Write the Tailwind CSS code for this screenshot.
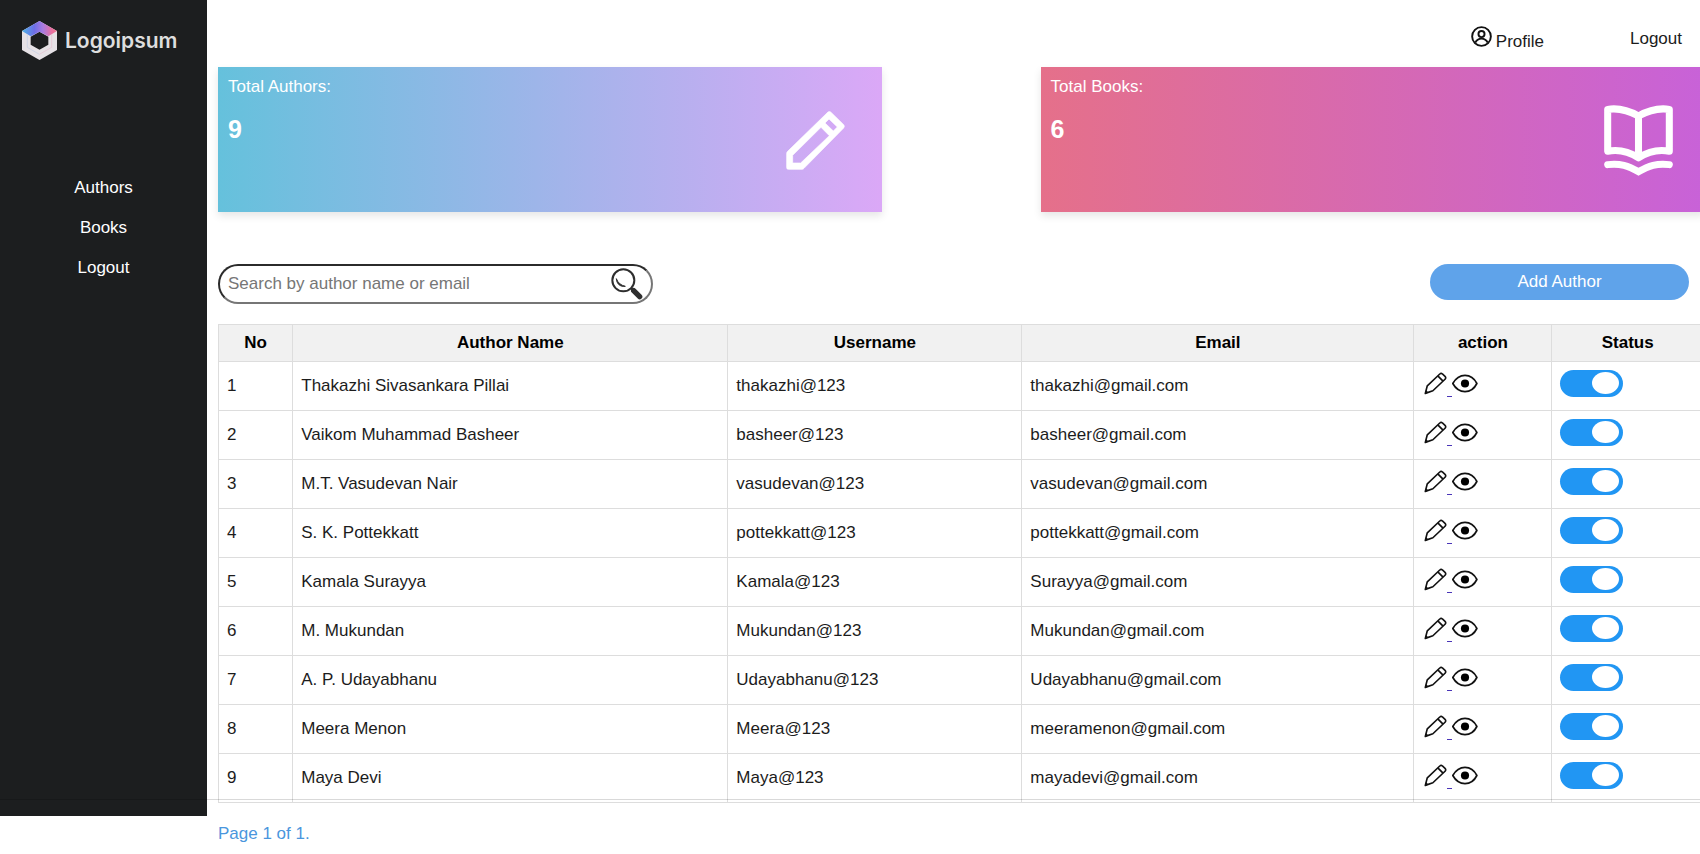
<!DOCTYPE html>
<html lang="en">
<head>
<meta charset="utf-8">
<meta name="viewport" content="width=device-width, initial-scale=1">
<title>Authors</title>
<script src="https://cdn.jsdelivr.net/npm/@tailwindcss/browser@4"></script>
</head>
<body class="bg-white font-['Liberation_Sans',Arial,sans-serif] text-[17px] leading-5 text-[#1c1c1c] overflow-x-hidden">

<svg class="hidden" aria-hidden="true">
  <symbol id="pencil" viewBox="104 367 70 70">
    <g fill="none" stroke="#111" stroke-width="5" stroke-linejoin="round">
      <path d="M108 432 L114 409 L152 373 Q156 369 160 373 L168 380 Q172 384 168 389 L131 424 Z"/>
      <path d="M146 379 L162 395"/>
    </g>
    <path d="M107 433 L110 422 L118 430 Z" fill="#111"/>
  </symbol>
  <symbol id="eye" viewBox="192 374 76 56">
    <path d="M194 402 C203 386 215 378 230 378 C245 378 257 386 265 402 C257 418 245 426 230 426 C215 426 203 418 194 402 Z" fill="none" stroke="#111" stroke-width="5" stroke-linejoin="round"/>
    <circle cx="230" cy="402" r="12" fill="#000"/>
  </symbol>
</svg>

<div class="relative flex">
  <aside class="w-[207px] shrink-0 bg-[#1c1e1f] text-white">
    <a href="#" class="flex items-center gap-2 pl-[22px] pt-[21px] text-[#dedede]">
      <svg class="w-[35px] h-[39px]" viewBox="66 63 105 117" aria-hidden="true">
        <defs>
          <linearGradient id="lg" x1="0" x2="1" y1="0" y2="0">
            <stop offset="0" stop-color="#4fb4e6"/><stop offset=".35" stop-color="#6c6ee6"/>
            <stop offset=".6" stop-color="#a97be0"/><stop offset=".85" stop-color="#e8709f"/><stop offset="1" stop-color="#ee7a92"/>
          </linearGradient>
        </defs>
        <path fill="#e6e2e6" fill-rule="evenodd" d="M118.500 63 L171 93 V150 L118.500 180 L66 150 V93 Z M118.500 95 L92 110 V134 L118.500 149 L145 134 V110 Z"/>
        <path fill="url(#lg)" d="M118.500 63 L171 93 L145 109 L118.500 95 L92 109 L66 93 Z"/>
        <path fill="none" stroke="#c3cfe6" stroke-width="2" d="M82 103 V142 L118 163"/>
        <path fill="none" stroke="#e6bfd0" stroke-width="2" d="M155 103 V142 L118 163"/>
      </svg>
      <span class="font-['Inter',sans-serif] font-semibold text-[21px] leading-7">Logoipsum</span>
    </a>
    <nav class="mt-[118px] flex flex-col items-center gap-5">
      <a href="#">Authors</a>
      <a href="#">Books</a>
      <a href="#">Logout</a>
    </nav>
  </aside>

  <main class="min-w-0 flex-1 pl-[11px] pb-[13px]">
    <header class="flex h-[67px] items-start justify-end gap-[86px] pr-[18px] pt-[26px]">
      <a href="#" class="flex items-start gap-1">
        <svg class="w-[21px] h-[21px]" viewBox="0 0 22 22" fill="none" stroke="#111" stroke-width="2" aria-hidden="true">
          <circle cx="11" cy="11" r="9.800"/>
          <circle cx="11" cy="8.500" r="3.200"/>
          <path d="M4.500 17.500 C6 14.200 8 13.200 11 13.200 C14 13.200 16 14.200 17.500 17.500"/>
        </svg>
        <span class="pt-1.5">Profile</span>
      </a>
      <a href="#" class="pt-[3px]">Logout</a>
    </header>

    <section class="-mr-1 grid grid-cols-2 gap-x-[159px] text-white">
      <article class="flex h-[145px] items-start justify-between bg-[linear-gradient(to_right,#65c1dc,#dba8f7)] pl-2.5 pr-[37px] pt-2.5 shadow-[0_4px_8px_rgba(0,0,0,0.1)]">
        <div>
          <h2>Total Authors:</h2>
          <p class="mt-4 text-[25px] font-bold leading-8">9</p>
        </div>
        <svg class="mt-[34px] w-[59px] h-[59px]" viewBox="257 182 177 177" aria-hidden="true">
          <path fill="#fff" stroke="#fff" stroke-width="2" stroke-linejoin="round" fill-rule="evenodd" d="M259 309 Q259 306 262 303 L383 185 Q387 182 391 185 L430 223 Q434 228 430 233 L311 354 Q309 357 305 357 H264 Q259 357 259 352 Z M277 315 V338 H301 L387 256 L362 231 Z M374 218 L399 242 L411 230 L386 206 Z"/>
        </svg>
      </article>
      <article class="flex h-[145px] items-start justify-between bg-[linear-gradient(to_right,#e5708a,#c862d8)] pl-2.5 pr-[31px] pt-2.5 shadow-[0_4px_8px_rgba(0,0,0,0.1)]">
        <div>
          <h2>Total Books:</h2>
          <p class="mt-4 text-[25px] font-bold leading-8">6</p>
        </div>
        <svg class="mt-7 w-[69px] h-[71px]" viewBox="492 314 206 212" fill="none" stroke="#fff" stroke-width="21" aria-hidden="true">
          <path stroke-linejoin="round" d="M503 327 C535 322 565 330 595 347 C625 330 655 322 687 327 V452 C655 446 625 452 595 472 C565 452 535 446 503 452 Z M595 347 V472"/>
          <path stroke-linecap="round" d="M503 492 C540 487 565 496 595 513 C625 496 650 487 687 492"/>
        </svg>
      </article>
    </section>

    <div class="mt-[52px] flex items-start justify-between pr-[11px]">
      <form class="flex h-10 w-[435px] items-center rounded-full border-2 border-t-[#2b2b2b] border-l-[#2b2b2b] border-r-[#767676] border-b-[#767676] pl-2 pr-2">
        <label for="search" class="sr-only">Search by author name or email</label>
        <input id="search" type="text" placeholder="Search by author name or email" class="h-full min-w-0 flex-1 outline-none placeholder:text-[#767676]">
        <button type="submit" aria-label="Search">
          <svg class="w-8 h-8" viewBox="1232 54 96 96" fill="none" stroke="#2e2e2e" aria-hidden="true">
            <circle cx="1269" cy="91" r="33" stroke-width="6"/>
            <path d="M1248 86 C1249 102 1260 111 1275 109 C1262 106 1253 99 1248 86 Z" stroke-width="3" fill="#2e2e2e"/>
            <path d="M1292 114 L1300 122" stroke-width="7"/>
            <path d="M1300 122 L1318 140" stroke-width="16" stroke-linecap="round"/>
          </svg>
        </button>
      </form>
      <button type="button" class="h-9 w-[259px] rounded-full bg-[#5fa3ea] text-white">Add Author</button>
    </div>

    <div class="-mr-1 mt-5">
      <table class="w-full table-fixed border-collapse [&_th]:border [&_th]:border-[#ddd] [&_td]:border [&_td]:border-[#ddd]">
        <colgroup>
          <col class="w-[5%]"><col class="w-[29.3%]"><col class="w-[19.8%]"><col class="w-[26.4%]"><col class="w-[9.3%]"><col>
        </colgroup>
        <thead>
          <tr class="h-[37px] bg-[#f1f1f1] font-bold text-black">
            <th scope="col">No</th><th scope="col">Author Name</th><th scope="col">Username</th><th scope="col">Email</th><th scope="col">action</th><th scope="col">Status</th>
          </tr>
        </thead>
        <tbody id="rows"></tbody>
      </table>
    </div>
  </main>
  <div class="pointer-events-none absolute inset-x-0 bottom-4 h-px bg-black/15"></div>
</div>
<footer class="pl-[218px] pt-2 text-[#4a96dd]">Page 1 of 1.</footer>

<script>
const authors = [
  ["Thakazhi Sivasankara Pillai", "thakazhi@123", "thakazhi@gmail.com"],
  ["Vaikom Muhammad Basheer", "basheer@123", "basheer@gmail.com"],
  ["M.T. Vasudevan Nair", "vasudevan@123", "vasudevan@gmail.com"],
  ["S. K. Pottekkatt", "pottekkatt@123", "pottekkatt@gmail.com"],
  ["Kamala Surayya", "Kamala@123", "Surayya@gmail.com"],
  ["M. Mukundan", "Mukundan@123", "Mukundan@gmail.com"],
  ["A. P. Udayabhanu", "Udayabhanu@123", "Udayabhanu@gmail.com"],
  ["Meera Menon", "Meera@123", "meeramenon@gmail.com"],
  ["Maya Devi", "Maya@123", "mayadevi@gmail.com"]
];
document.getElementById("rows").innerHTML = authors.map(([name, user, mail], i) => `
  <tr class="h-[49px]">
    <td class="pl-2">${i + 1}</td>
    <td class="pl-2">${name}</td>
    <td class="pl-2">${user}</td>
    <td class="pl-2">${mail}</td>
    <td class="pl-2.5 pb-0.5">
      <div class="flex h-[26px] items-start">
        <a href="#" aria-label="Edit ${name}" class="flex items-end">
          <svg class="w-[23px] h-[23px]"><use href="#pencil"/></svg>
          <span class="-mb-0.5 h-px w-[5px] bg-[#4a35b8]"></span>
        </a>
        <a href="#" aria-label="View ${name}" class="pt-0.5"><svg class="w-[26px] h-[19px]"><use href="#eye"/></svg></a>
      </div>
    </td>
    <td class="pl-2 pb-1.5">
      <input type="checkbox" checked aria-label="Status of ${name}" class="block h-[27px] w-[63px] appearance-none rounded-full bg-[#2196f3] pl-8 pt-0.5 before:block before:h-[22px] before:w-[27px] before:rounded-[50%] before:bg-white">
    </td>
  </tr>`).join("");
</script>
</body>
</html>
